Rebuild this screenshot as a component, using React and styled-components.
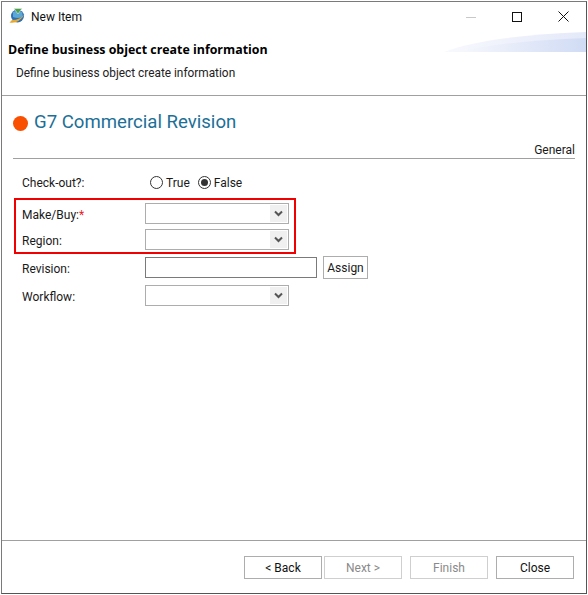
import React from 'react';
import styled, { createGlobalStyle } from 'styled-components';

const GlobalStyle = createGlobalStyle`
  html, body {
    margin: 0;
    padding: 0;
    background: #fff;
  }
  body {
    font-family: Roboto, 'Open Sans', sans-serif;
    font-size: 12px;
    color: #1a1a1a;
  }
`;

const Window = styled.div`
  position: relative;
  box-sizing: border-box;
  width: 586px;
  height: 593px;
  margin: 1px 0 0 1px;
  border: 1px solid #7a7a7a;
  border-right-color: #555;
  border-bottom-color: #555;
  background: #fff;
  display: flex;
  flex-direction: column;
`;

const TitleBar = styled.div`
  height: 29px;
  display: flex;
  align-items: center;
  flex-shrink: 0;
  padding-left: 7px;
  gap: 5px;
`;

const TitleText = styled.span`
  font-size: 12px;
  color: #111;
  flex: 1;
`;

const WinControls = styled.div`
  display: flex;
`;

const WinButton = styled.button`
  width: 46px;
  height: 29px;
  border: 0;
  padding: 0;
  background: none;
  display: flex;
  align-items: center;
  justify-content: center;
`;

const Header = styled.div`
  box-sizing: border-box;
  height: 65px;
  padding: 10px 0 0 6px;
  border-bottom: 1px solid #a0a0a0;
  flex-shrink: 0;
`;

const Banner = styled.svg`
  position: absolute;
  top: 30px;
  right: 0;
`;

const HeaderTitle = styled.div`
  font-family: 'Open Sans', sans-serif;
  font-size: 12.4px;
  font-weight: 700;
  color: #000;
  line-height: 18px;
  position: relative;
`;

const HeaderSub = styled.div`
  font-size: 11.85px;
  line-height: 17px;
  margin: 6px 0 0 8px;
  color: #222;
`;

const Body = styled.div`
  flex: 1;
  padding: 0 11px 0 11px;
`;

const TypeHeading = styled.div`
  display: flex;
  align-items: center;
  gap: 6px;
  margin-top: 11px;
  height: 30px;
  color: #1c6f96;
  font-size: 18.6px;
`;

const Dot = styled.span`
  width: 15px;
  height: 15px;
  margin-top: 3px;
  border-radius: 50%;
  background: #f84f00;
`;

const SectionTitle = styled.div`
  margin-top: 5px;
  height: 16px;
  line-height: 16px;
  text-align: right;
  font-size: 12px;
  border-bottom: 1px solid #a0a0a0;
`;

const Form = styled.div`
  display: flex;
  flex-direction: column;
  margin-top: 13px;
`;

const Row = styled.div`
  display: flex;
  align-items: center;
  height: ${(p) => p.$height || 21}px;
  margin-top: ${(p) => p.$gap || 0}px;
  padding-left: ${(p) => p.$inset ?? 9}px;
`;

const Label = styled.div`
  width: 123px;
  flex-shrink: 0;
  padding-top: ${(p) => (p.$flush ? 0 : 2)}px;
  font-size: 12px;
  color: #1a1a1a;
`;

const Required = styled.span`
  color: #e8202a;
`;

const Highlight = styled.div`
  box-sizing: border-box;
  width: 282px;
  height: 56px;
  margin: 5px 0 0 1px;
  padding-top: 3px;
  border: 2px solid #f00000;
  display: flex;
  flex-direction: column;
  gap: 5px;
`;

const Select = styled.div`
  box-sizing: border-box;
  width: 144px;
  height: 21px;
  border: 1px solid #adadad;
  background: #fff;
  display: flex;
  justify-content: flex-end;
  padding: 1px;
`;

const Arrow = styled.span`
  width: 17px;
  background: #f0f0f0;
  display: flex;
  align-items: center;
  justify-content: center;
`;

const TextInput = styled.div`
  box-sizing: border-box;
  width: 172px;
  height: 21px;
  border: 1px solid #7a7a7a;
  background: #fff;
`;

const SmallButton = styled.button`
  box-sizing: border-box;
  width: 45px;
  height: 23px;
  margin-left: 6px;
  padding: 0;
  border: 1px solid #adadad;
  background: #fff;
  font: inherit;
  color: #1a1a1a;
`;

const RadioGroup = styled.div`
  display: flex;
  align-items: center;
  gap: 8px;
  margin-left: 5px;
`;

const RadioItem = styled.label`
  display: flex;
  align-items: center;
  gap: 3px;
`;

const RadioCircle = styled.span`
  box-sizing: border-box;
  width: 13px;
  height: 13px;
  border-radius: 50%;
  border: 1px solid #333;
  display: flex;
  align-items: center;
  justify-content: center;

  &::after {
    content: '';
    width: 7px;
    height: 7px;
    border-radius: 50%;
    background: ${(p) => (p.$checked ? '#333' : 'transparent')};
  }
`;

const Footer = styled.div`
  box-sizing: border-box;
  height: 53px;
  flex-shrink: 0;
  border-top: 1px solid #a0a0a0;
  padding: 15px 12px 0 0;
  display: flex;
  justify-content: flex-end;
`;

const NavButton = styled.button`
  box-sizing: border-box;
  width: 78px;
  height: 23px;
  margin-left: ${(p) => p.$gap || 0}px;
  padding: 0;
  font: inherit;
  background: #fff;
  border: 1px solid ${(p) => (p.disabled ? '#cfcfcf' : '#adadad')};
  color: ${(p) => (p.disabled ? '#8a8a8a' : '#111')};
`;

const AppIcon = () => (
  <svg width="17" height="17" viewBox="0 0 17 17">
    <circle cx="8.5" cy="8" r="6.5" fill="#2f6fb5" />
    <path d="M4 4 Q8 2 13 4 L14 9 Q9 11 4 9Z" fill="#5aa7d8" />
    <path d="M5 0.5 L13 0.5 L9 6Z" fill="#4f9d50" stroke="#dff0d8" strokeWidth="0.6" />
    <path d="M0.5 14.5 Q9 16.5 16 6 Q11 12 3 12Z" fill="#e8a92c" />
  </svg>
);

const Chevron = () => (
  <svg width="9" height="7" viewBox="0 0 9 7">
    <path d="M1 1.5 L4.5 5 L8 1.5" fill="none" stroke="#555" strokeWidth="2" />
  </svg>
);

const Combo = () => (
  <Select>
    <Arrow>
      <Chevron />
    </Arrow>
  </Select>
);

const App = () => (
  <>
    <GlobalStyle />
    <Window>
      <TitleBar>
        <AppIcon />
        <TitleText>New Item</TitleText>
        <WinControls>
          <WinButton aria-label="Minimize">
            <svg width="10" height="10" viewBox="0 0 10 10">
              <path d="M0 5.5 H10" stroke="#c8c8c8" />
            </svg>
          </WinButton>
          <WinButton aria-label="Maximize">
            <svg width="10" height="10" viewBox="0 0 10 10">
              <rect x="0.5" y="0.5" width="9" height="9" fill="none" stroke="#111" />
            </svg>
          </WinButton>
          <WinButton aria-label="Close">
            <svg width="11" height="11" viewBox="0 0 11 11">
              <path d="M0.5 0.5 L10.5 10.5 M10.5 0.5 L0.5 10.5" stroke="#111" />
            </svg>
          </WinButton>
        </WinControls>
      </TitleBar>
      <Banner width="142" height="21" viewBox="0 0 142 21">
        <defs>
          <linearGradient id="bannerLight" x1="0" x2="1" y1="0" y2="0">
            <stop offset="0" stopColor="#f8f9fe" />
            <stop offset="1" stopColor="#e4e9f9" />
          </linearGradient>
          <linearGradient id="bannerDark" x1="0" x2="1" y1="0" y2="0">
            <stop offset="0" stopColor="#f7f8fd" />
            <stop offset="1" stopColor="#d0dbf4" />
          </linearGradient>
        </defs>
        <path d="M0 20 Q40 4 142 0 V20Z" fill="url(#bannerLight)" />
        <path d="M14 20 Q60 9 142 6 V20Z" fill="url(#bannerDark)" />
      </Banner>
      <Header>
        <HeaderTitle>Define business object create information</HeaderTitle>
        <HeaderSub>Define business object create information</HeaderSub>
      </Header>
      <Body>
        <TypeHeading>
          <Dot />
          G7 Commercial Revision
        </TypeHeading>
        <SectionTitle>General</SectionTitle>
        <Form>
          <Row>
            <Label $flush>Check-out?:</Label>
            <RadioGroup>
              <RadioItem>
                <RadioCircle />
                True
              </RadioItem>
              <RadioItem>
                <RadioCircle $checked />
                False
              </RadioItem>
            </RadioGroup>
          </Row>
          <Highlight>
            <Row $inset={6}>
              <Label>
                Make/Buy:<Required>*</Required>
              </Label>
              <Combo />
            </Row>
            <Row $inset={6}>
              <Label>Region:</Label>
              <Combo />
            </Row>
          </Highlight>
          <Row $height={23} $gap={2}>
            <Label>Revision:</Label>
            <TextInput />
            <SmallButton>Assign</SmallButton>
          </Row>
          <Row $gap={6}>
            <Label>Workflow:</Label>
            <Combo />
          </Row>
        </Form>
      </Body>
      <Footer>
        <NavButton>&lt; Back</NavButton>
        <NavButton $gap={2} disabled>
          Next &gt;
        </NavButton>
        <NavButton $gap={8} disabled>
          Finish
        </NavButton>
        <NavButton $gap={8}>Close</NavButton>
      </Footer>
    </Window>
  </>
);

export default App;
